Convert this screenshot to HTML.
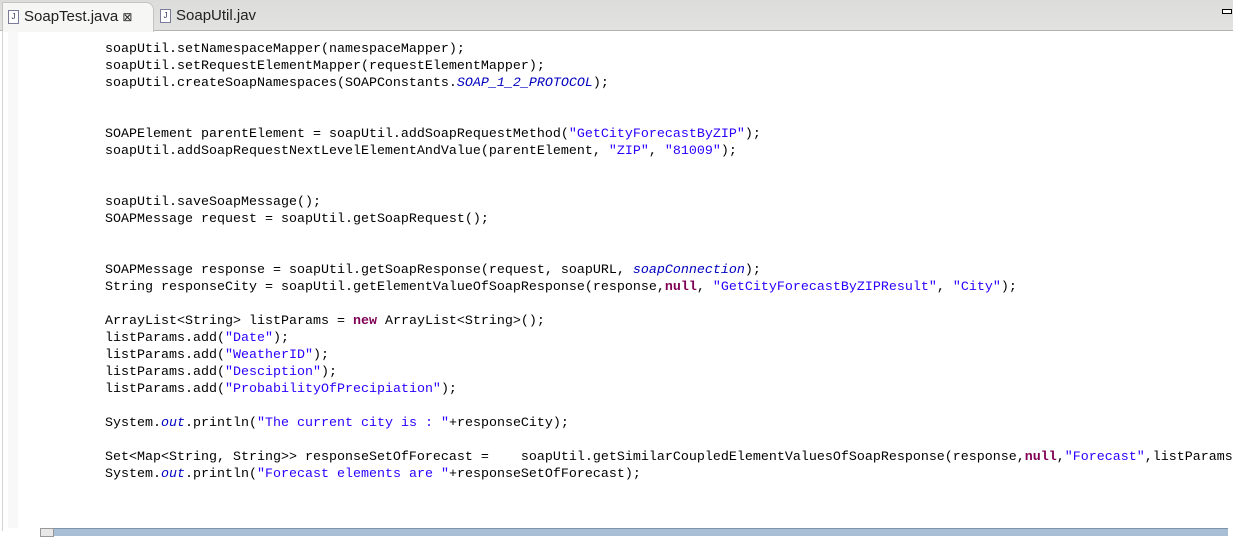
<!DOCTYPE html>
<html><head><style>
html,body{margin:0;padding:0;width:1233px;height:535px;overflow:hidden;background:#fff;font-family:"Liberation Sans",sans-serif}
.tabbar{position:absolute;left:0;top:0;width:1233px;height:30px;background:linear-gradient(#dcdcda,#e2e2e0);border-bottom:1px solid #b4b4b2}
.tab1{position:absolute;left:2px;top:2px;width:150px;height:29px;background:#f6f6f5;border:1px solid #c4c4c2;border-bottom:none;border-radius:0 8px 0 0;font-size:15px;color:#222}
.tab2{position:absolute;left:160px;top:7px;font-size:15px;color:#222}
.ic{display:inline-block;width:9px;height:12px;border:1px solid #7a7a9a;background:#fff;font-size:8px;line-height:12px;text-align:center;color:#335;vertical-align:middle;margin-right:5px}
.gut{position:absolute;left:2px;top:31px;width:1px;height:500px;background:#d4d4d4}
.gut2{position:absolute;left:8px;top:31px;width:10px;height:497px;background:#f8f8f8}
pre{position:absolute;left:105px;top:41px;margin:0;font-family:"Liberation Mono",monospace;font-size:13.33px;line-height:17px;color:#000}
.s{color:#2a00ff}.k{color:#7f0055;font-weight:bold}.f{color:#0000c0;font-style:italic}
.sb{position:absolute;left:40px;top:528px;width:1188px;height:7px;background:#a9bfd6;border-top:1px solid #7d93ad}
.sbl{position:absolute;left:40px;top:528px;width:12px;height:7px;background:#e8e8e8;border:1px solid #999}
.min{position:absolute;left:1222px;top:9px;width:8px;height:3px;border:1px solid #000;background:#fff}
</style></head><body>
<div class="tabbar"></div>
<div class="tab1"><div style="position:absolute;left:5px;top:5px"><span class="ic">J</span>SoapTest.java <span style="font-size:12px">⊠</span></div></div>
<div class="tab2"><span class="ic">J</span>SoapUtil.jav</div>
<div class="min"></div>
<div class="gut"></div><div class="gut2"></div>
<pre>soapUtil.setNamespaceMapper(namespaceMapper);
soapUtil.setRequestElementMapper(requestElementMapper);
soapUtil.createSoapNamespaces(SOAPConstants.<span class="f">SOAP_1_2_PROTOCOL</span>);


SOAPElement parentElement = soapUtil.addSoapRequestMethod(<span class="s">"GetCityForecastByZIP"</span>);
soapUtil.addSoapRequestNextLevelElementAndValue(parentElement, <span class="s">"ZIP"</span>, <span class="s">"81009"</span>);


soapUtil.saveSoapMessage();
SOAPMessage request = soapUtil.getSoapRequest();


SOAPMessage response = soapUtil.getSoapResponse(request, soapURL, <span class="f">soapConnection</span>);
String responseCity = soapUtil.getElementValueOfSoapResponse(response,<span class="k">null</span>, <span class="s">"GetCityForecastByZIPResult"</span>, <span class="s">"City"</span>);

ArrayList&lt;String&gt; listParams = <span class="k">new</span> ArrayList&lt;String&gt;();
listParams.add(<span class="s">"Date"</span>);
listParams.add(<span class="s">"WeatherID"</span>);
listParams.add(<span class="s">"Desciption"</span>);
listParams.add(<span class="s">"ProbabilityOfPrecipiation"</span>);

System.<span class="f">out</span>.println(<span class="s">"The current city is : "</span>+responseCity);

Set&lt;Map&lt;String, String&gt;&gt; responseSetOfForecast =    soapUtil.getSimilarCoupledElementValuesOfSoapResponse(response,<span class="k">null</span>,<span class="s">"Forecast"</span>,listParams
System.<span class="f">out</span>.println(<span class="s">"Forecast elements are "</span>+responseSetOfForecast);</pre>
<div class="sb"></div><div class="sbl"></div>
</body></html>
